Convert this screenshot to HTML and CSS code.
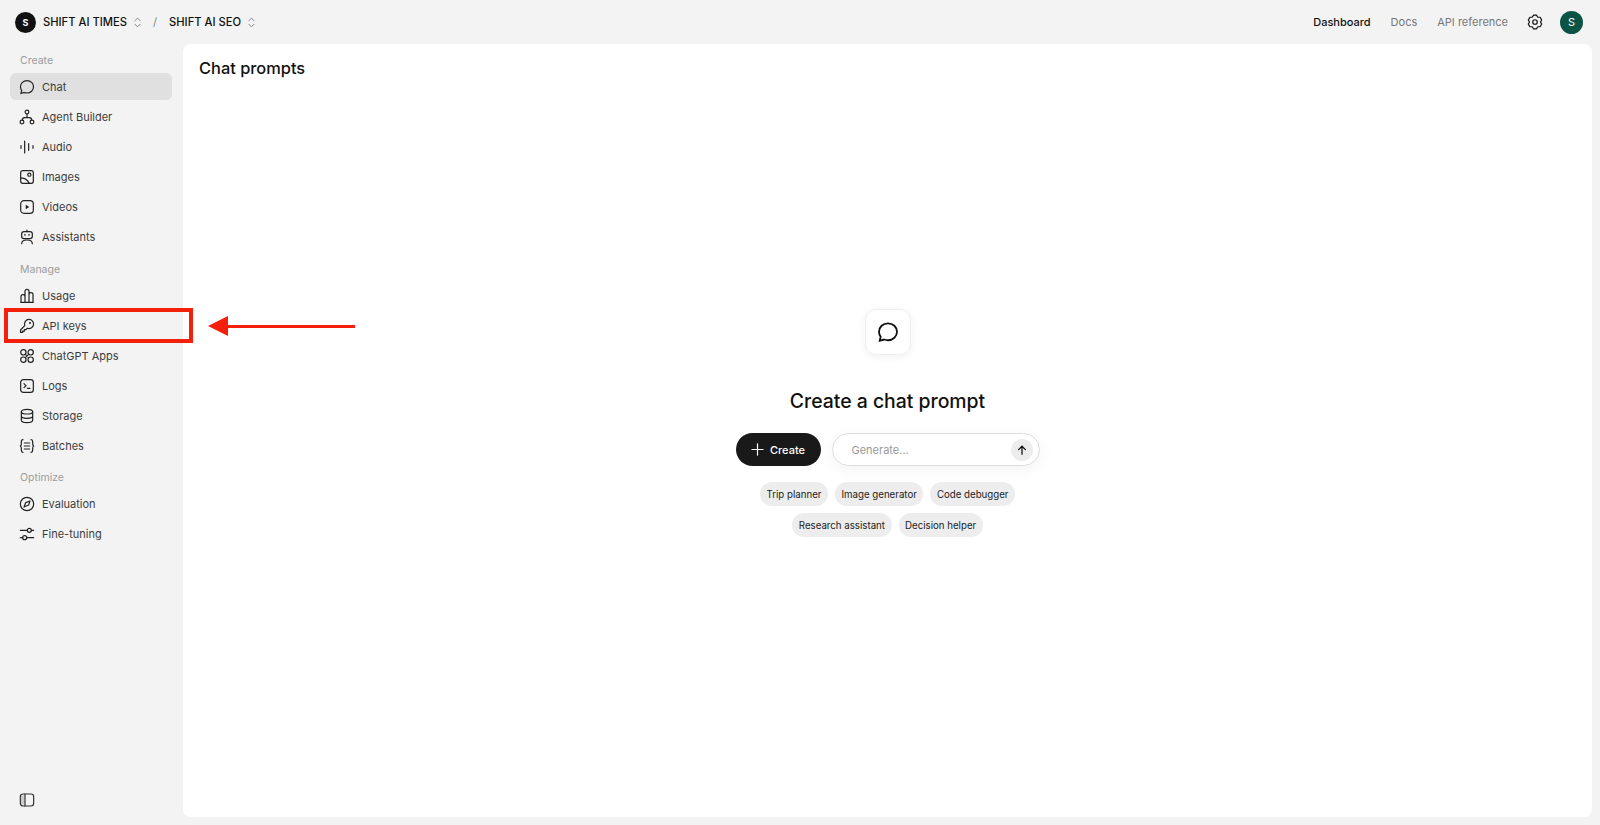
FILE: index.html
```html
<!DOCTYPE html>
<html lang="en">

<head>
    <meta charset="UTF-8">
    <meta name="viewport" content="width=device-width, initial-scale=1.0">
    <title>Chat prompts</title>
    <link rel="stylesheet" href="styles.css">
</head>

<body>
    <header class="topbar">
        <div class="crumbs">
            <span class="org-logo">S</span>
            <span class="crumb">SHIFT AI TIMES</span>
            <svg class="updown" viewBox="0 0 8 12"><path d="M1 4l3-3 3 3M1 8l3 3 3-3" /></svg>
            <span class="slash">/</span>
            <span class="crumb">SHIFT AI SEO</span>
            <svg class="updown" viewBox="0 0 8 12"><path d="M1 4l3-3 3 3M1 8l3 3 3-3" /></svg>
        </div>
        <nav class="topnav">
            <a class="current">Dashboard</a>
            <a>Docs</a>
            <a>API reference</a>
            <svg class="gear" viewBox="0 0 24 24"><path d="M9.640 1.770H14.360L16.100 4.900 19.680 4.840 22.040 8.930 20.200 12 22.040 15.070 19.680 19.160 16.100 19.100 14.360 22.230H9.640L7.900 19.100 4.320 19.160 1.960 15.070 3.800 12 1.960 8.930 4.320 4.840 7.900 4.900z" stroke-linejoin="round" /><circle cx="12" cy="12" r="3.400" /></svg>
            <span class="avatar">S</span>
        </nav>
    </header>

    <div class="app">
        <aside class="sidebar">
            <div class="side-groups">
                <h4 class="side-label">Create</h4>
                <ul class="side-list">
                    <li class="current"><svg viewBox="0 0 24 24"><path d="M12 2.500c5.500 0 9.800 4 9.800 9.200S17.500 21 12 21c-1.500 0-2.900-.3-4.200-.8L3 21.500l1-4.300C2.900 15.700 2.200 13.800 2.200 11.700 2.200 6.500 6.500 2.500 12 2.500z" /></svg>Chat</li>
                    <li><svg viewBox="0 0 24 24"><circle cx="12" cy="4.500" r="2.800" /><circle cx="4.500" cy="19.500" r="2.800" /><circle cx="19.500" cy="19.500" r="2.800" /><path d="M12 7.300V13M5 16.800c0-2.500 1.500-3.800 3.500-3.800h7c2 0 3.500 1.300 3.500 3.800" /></svg>Agent Builder</li>
                    <li><svg viewBox="0 0 24 24"><path d="M3 10v4M8.500 3v18M14.500 7v10M21 10v4" /></svg>Audio</li>
                    <li><svg viewBox="0 0 24 24"><rect x="2.500" y="2.500" width="19" height="19" rx="3" /><circle cx="15.500" cy="8.500" r="2.400" /><path d="M2.500 14c5-1 9 1 13 7.500" /></svg>Images</li>
                    <li><svg viewBox="0 0 24 24"><rect x="2.500" y="2.500" width="19" height="19" rx="5" /><path class="solid" d="M10 8.500l5.500 3.500-5.500 3.500z" /></svg>Videos</li>
                    <li><svg viewBox="0 0 24 24"><rect x="4" y="4" width="16" height="10.500" rx="3.500" /><path d="M12 1.500V4M9 8v1.500M15 8v1.500M4 22c0-4 3.500-5.500 8-5.500s8 1.500 8 5.500" /></svg>Assistants</li>
                </ul>
                <h4 class="side-label">Manage</h4>
                <ul class="side-list">
                    <li><svg viewBox="0 0 24 24"><path d="M3 21.500V13a2.500 2.500 0 0 1 6 0v8.500M9 21.500V5a3 3 0 0 1 6 0v16.500M15 21.500V10a3 3 0 0 1 6 0v11.500M2.500 21.500h19" stroke-linejoin="round" /></svg>Usage</li>
                    <li><svg viewBox="0 0 24 24"><path d="M15 2.200a6.800 6.800 0 1 1-2.500 13.100L10.500 17.300H8v2.500H5.500v1.900H2.300V18L8.700 11.500A6.800 6.800 0 0 1 15 2.200z" stroke-linejoin="round" /><circle class="solid" cx="16.500" cy="7.500" r="1.500" /></svg>API keys</li>
                    <li><svg viewBox="0 0 24 24"><circle cx="6.500" cy="6.500" r="4" /><circle cx="17.500" cy="6.500" r="4" /><circle cx="6.500" cy="17.500" r="4" /><circle cx="17.500" cy="17.500" r="4" /><path d="M10 10l4 4M14 10l-4 4" /></svg>ChatGPT Apps</li>
                    <li><svg viewBox="0 0 24 24"><rect x="2.500" y="2.500" width="19" height="19" rx="4" /><path d="M7.500 8.500l3 3-3 3M12.500 15.500h4" /></svg>Logs</li>
                    <li><svg viewBox="0 0 24 24"><ellipse cx="12" cy="5.500" rx="8.500" ry="3.500" /><path d="M3.500 5.500v13c0 2 3.800 3.500 8.500 3.500s8.500-1.500 8.500-3.500v-13M3.500 12c0 2 3.800 3.500 8.500 3.500s8.500-1.500 8.500-3.500" /></svg>Storage</li>
                    <li><svg viewBox="0 0 24 24"><path d="M6 2.500c-2 0-2.500 1-2.500 3v3.500c0 2-.8 3-2.300 3 1.500 0 2.300 1 2.300 3v3.500c0 2 .5 3 2.500 3M18 2.500c2 0 2.500 1 2.500 3v3.500c0 2 .8 3 2.300 3-1.500 0-2.300 1-2.300 3v3.500c0 2-.5 3-2.500 3M8 7.500h8M8 12h8M8 16.500h8" /></svg>Batches</li>
                </ul>
                <h4 class="side-label">Optimize</h4>
                <ul class="side-list">
                    <li><svg viewBox="0 0 24 24"><circle cx="12" cy="12" r="10" /><path d="M16.500 7.500l-2 6-7 3 2.500-6.500z" stroke-linejoin="round" /></svg>Evaluation</li>
                    <li><svg viewBox="0 0 24 24"><circle cx="15.500" cy="6.500" r="3" /><circle cx="8.500" cy="17.500" r="3" /><path d="M2 6.500h10.500M18.500 6.500H22M2 17.500h3.500M11.500 17.500H22" /></svg>Fine-tuning</li>
                </ul>
            </div>
            <svg class="side-toggle" viewBox="0 0 24 24"><path class="shade" d="M3 5h5.500v14H3z" /><rect x="2" y="3" width="20" height="18" rx="4" /><path d="M9 3v18" /></svg>
        </aside>

        <main class="card">
            <h1 class="page-title">Chat prompts</h1>
            <section class="empty">
                <div class="empty-icon">
                    <svg viewBox="0 0 24 24"><path d="M12 2.500c5.500 0 9.800 4 9.800 9.200S17.500 21 12 21c-1.500 0-2.900-.3-4.200-.8L3 21.500l1-4.300C2.900 15.700 2.200 13.800 2.200 11.700 2.200 6.500 6.500 2.500 12 2.500z" /></svg>
                </div>
                <h2 class="empty-title">Create a chat prompt</h2>
                <div class="actions">
                    <button class="create-btn"><svg viewBox="0 0 14 14"><path d="M7 1v12M1 7h12" /></svg>Create</button>
                    <div class="generate">
                        <span>Generate...</span>
                        <span class="send"><svg viewBox="0 0 12 12"><path d="M6 11V1.500M2 5.500l4-4 4 4" /></svg></span>
                    </div>
                </div>
                <div class="chips">
                    <span class="chip">Trip planner</span>
                    <span class="chip">Image generator</span>
                    <span class="chip">Code debugger</span>
                    <span class="chip">Research assistant</span>
                    <span class="chip">Decision helper</span>
                </div>
            </section>
        </main>
    </div>

    <!-- annotation drawn over the screenshot -->
    <div class="mark-box"></div>
    <div class="mark-arrow"></div>
</body>

</html>
```

FILE: styles.css
```css
* {
    margin: 0;
    padding: 0;
    box-sizing: border-box;
}

html,
body {
    height: 100%;
    overflow: hidden;
}

body {
    background-color: #f3f3f3;
    color: #111;
    font-family: Inter, "Liberation Sans", sans-serif;
    display: flex;
    flex-direction: column;
    position: relative;
}

svg {
    fill: none;
    stroke: currentColor;
    stroke-width: 1.8;
    stroke-linecap: round;
    flex: none;
}

svg .solid {
    fill: currentColor;
    stroke: none;
}

/* top bar */
.topbar {
    height: 44px;
    flex: none;
    display: flex;
    align-items: center;
    justify-content: space-between;
    padding: 0 17px 0 15px;
}

.crumbs {
    display: flex;
    align-items: center;
    font-size: 11.2px;
    font-weight: 500;
}

.org-logo {
    width: 21px;
    height: 21px;
    border-radius: 50%;
    background: #111;
    color: #fff;
    font-size: 9px;
    font-weight: 700;
    display: flex;
    align-items: center;
    justify-content: center;
    margin-right: 7px;
}

.updown {
    width: 7px;
    height: 11px;
    margin-left: 7px;
    color: #777;
    stroke-width: 1;
}

.slash {
    color: #888;
    font-weight: 400;
    margin: 0 12px 0 12px;
}

.topnav {
    display: flex;
    align-items: center;
    font-size: 11px;
    color: #777;
}

.topnav a {
    margin-right: 20px;
}

.topnav a:nth-child(3) {
    margin-right: 19px;
}

.topnav a.current {
    color: #111;
    font-weight: 500;
}

.gear {
    width: 16px;
    height: 16px;
    color: #111;
    margin-right: 17px;
}

.avatar {
    width: 23px;
    height: 23px;
    border-radius: 50%;
    background: #0b5345;
    color: #fff;
    font-size: 11px;
    display: flex;
    align-items: center;
    justify-content: center;
}

/* layout */
.app {
    flex: 1;
    display: flex;
    padding: 0 8px 8px 0;
    min-height: 0;
}

.sidebar {
    width: 183px;
    flex: none;
    display: flex;
    flex-direction: column;
    justify-content: space-between;
    padding: 0 11px 0 10px;
}

.side-label {
    font-size: 10.5px;
    font-weight: 400;
    color: #9c9c9c;
    line-height: 14px;
    padding-left: 10px;
    padding-top: 1px;
    margin-top: 9px;
    margin-bottom: 5px;
}

.side-list {
    list-style: none;
    margin-bottom: 12px;
}

.side-list:nth-of-type(2) {
    margin-bottom: 11px;
}

.side-list li {
    height: 27px;
    margin-bottom: 3px;
    display: flex;
    align-items: center;
    gap: 7px;
    padding-left: 9px;
    border-radius: 6px;
    font-size: 11px;
    color: #3d3d3d;
}

.side-list li svg {
    width: 16px;
    height: 16px;
    color: #222;
}

.side-list li.current {
    background: #e0e0e0;
}

.side-toggle {
    width: 16px;
    height: 16px;
    margin: 0 0 9px 9px;
    color: #333;
}

.side-toggle .shade {
    fill: #ccc;
    stroke: none;
}

/* main card */
.card {
    flex: 1;
    background: #fff;
    border-radius: 8px;
    padding: 14px 16px;
}

.page-title {
    font-size: 16.4px;
    font-weight: 500;
    line-height: 20px;
    color: #111;
}

.empty {
    display: flex;
    flex-direction: column;
    align-items: center;
    margin-top: 231px;
}

.empty-icon {
    width: 46px;
    height: 46px;
    border-radius: 11px;
    border: 1px solid #efefef;
    box-shadow: 0 2px 8px rgba(0, 0, 0, .06);
    display: flex;
    align-items: center;
    justify-content: center;
}

.empty-icon svg {
    width: 22px;
    height: 22px;
    color: #111;
    stroke-width: 2;
}

.empty-title {
    font-size: 19.4px;
    font-weight: 500;
    line-height: 24px;
    margin-top: 34px;
    color: #111;
}

.actions {
    display: flex;
    gap: 11px;
    margin-top: 20px;
}

.create-btn {
    width: 85px;
    height: 33px;
    border: none;
    border-radius: 17px;
    background: #191919;
    color: #fff;
    font-family: inherit;
    font-size: 11px;
    font-weight: 500;
    display: flex;
    align-items: center;
    justify-content: center;
    gap: 6px;
}

.create-btn svg {
    width: 13px;
    height: 13px;
    stroke-width: 1.3;
}

.generate {
    width: 208px;
    height: 33px;
    border: 1px solid #dcdcdc;
    border-radius: 17px;
    box-shadow: 0 4px 16px rgba(0, 0, 0, .05);
    display: flex;
    align-items: center;
    justify-content: space-between;
    padding: 0 6px 0 19px;
    font-size: 11px;
    color: #999;
}

.send {
    width: 22px;
    height: 22px;
    border-radius: 50%;
    background: #ececec;
    color: #111;
    display: flex;
    align-items: center;
    justify-content: center;
}

.send svg {
    width: 10px;
    height: 10px;
    stroke-width: 1.500;
}

.chips {
    width: 270px;
    display: flex;
    flex-wrap: wrap;
    justify-content: center;
    gap: 7px;
    margin-top: 16px;
}

.chip {
    height: 24px;
    padding: 0 6.5px;
    border-radius: 12px;
    background: #ededed;
    font-size: 9.7px;
    line-height: 25px;
    color: #222;
}

/* red annotation */
.mark-box {
    position: absolute;
    left: 4px;
    top: 308px;
    width: 189px;
    height: 35px;
    border: 4px solid #f5200c;
}

.mark-arrow {
    position: absolute;
    left: 226px;
    top: 324.500px;
    width: 129px;
    height: 3px;
    background: #f5200c;
}

.mark-arrow::before {
    content: "";
    position: absolute;
    left: -18px;
    top: -9px;
    border-style: solid;
    border-width: 10.500px 20px 10.500px 0;
    border-color: transparent #f5200c transparent transparent;
}
```
